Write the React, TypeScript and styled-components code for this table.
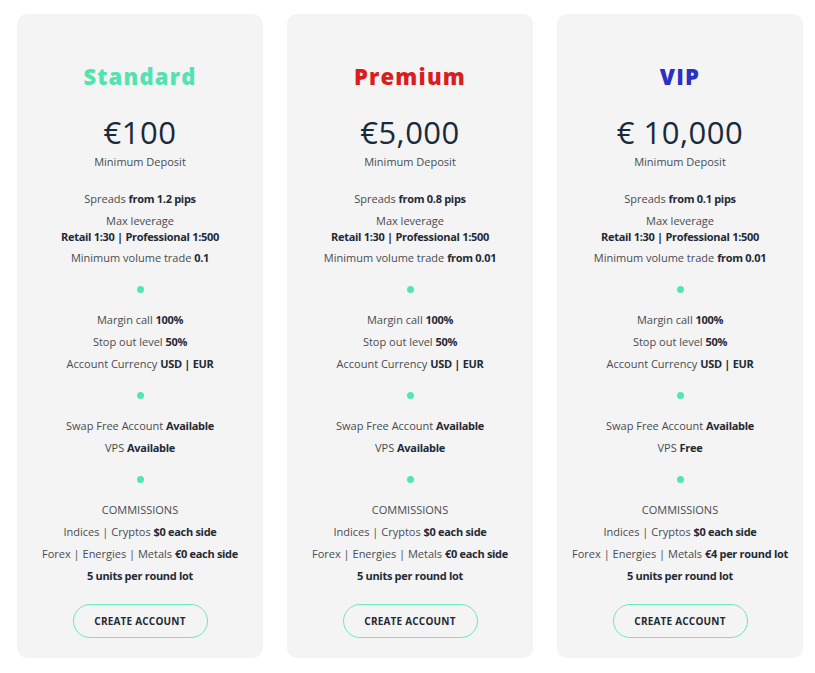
import styled, { createGlobalStyle } from "styled-components";

const GlobalStyle = createGlobalStyle`
  body {
    margin: 0;
    background: #ffffff;
    font-family: "Open Sans", "Liberation Sans", sans-serif;
  }
`;

const Page = styled.div`
  display: flex;
  gap: 24px;
  padding: 14px 0 0 17px;
`;

const Card = styled.div`
  width: 246px;
  box-sizing: border-box;
  background: #f4f4f4;
  border-radius: 10px;
  padding: 47px 0 20px;
  display: flex;
  flex-direction: column;
  align-items: center;
  text-align: center;
`;

const Title = styled.h2<{ $color: string }>`
  margin: 0;
  font-size: 22px;
  line-height: 30px;
  font-weight: 800;
  letter-spacing: 1.2px;
  color: ${({ $color }) => $color};
`;

const Price = styled.div`
  margin-top: 23px;
  font-size: 31px;
  line-height: 36px;
  font-weight: 400;
  letter-spacing: 0.5px;
  color: #1b2a3a;
`;

const Caption = styled.div`
  margin-top: 4px;
  font-size: 11px;
  line-height: 16px;
  color: #474c52;
`;

const Group = styled.div<{ $first?: boolean }>`
  margin-top: ${({ $first }) => ($first ? "21px" : "0")};
  display: flex;
  flex-direction: column;
  gap: ${({ $first }) => ($first ? "5.5px" : "6px")};
`;

const Line = styled.div`
  font-size: 11px;
  line-height: 16px;
  color: #474c52;
  white-space: nowrap;

  b {
    font-weight: 700;
    letter-spacing: -0.3px;
    color: #1f2a36;
  }
`;

const Dot = styled.span`
  display: block;
  width: 7px;
  height: 7px;
  margin: 20px 0 19px;
  border-radius: 50%;
  background: #52e6b1;
`;

const Button = styled.button`
  margin-top: 20px;
  width: 135px;
  height: 34px;
  border: 1px solid #6ee8bd;
  border-radius: 17px;
  background: transparent;
  font-family: inherit;
  font-size: 10px;
  font-weight: 700;
  letter-spacing: 0.2px;
  color: #1f2a36;
  cursor: pointer;
`;

type Plan = {
  name: string;
  color: string;
  price: string;
  spreads: string;
  minVolume: string;
  vps: string;
  forex: string;
};

const plans: Plan[] = [
  { name: "Standard", color: "#52e3ae", price: "€100", spreads: "from 1.2 pips", minVolume: "0.1", vps: "Available", forex: "€0 each side" },
  { name: "Premium", color: "#d81e1e", price: "€5,000", spreads: "from 0.8 pips", minVolume: "from 0.01", vps: "Available", forex: "€0 each side" },
  { name: "VIP", color: "#2a31c2", price: "€ 10,000", spreads: "from 0.1 pips", minVolume: "from 0.01", vps: "Free", forex: "€4 per round lot" },
];

const PlanCard = ({ plan }: { plan: Plan }) => (
  <Card>
    <Title $color={plan.color}>{plan.name}</Title>
    <Price>{plan.price}</Price>
    <Caption>Minimum Deposit</Caption>

    <Group $first>
      <Line>
        Spreads <b>{plan.spreads}</b>
      </Line>
      <Line>
        Max leverage
        <br />
        <b>Retail 1:30 | Professional 1:500</b>
      </Line>
      <Line>
        Minimum volume trade <b>{plan.minVolume}</b>
      </Line>
    </Group>

    <Dot />

    <Group>
      <Line>
        Margin call <b>100%</b>
      </Line>
      <Line>
        Stop out level <b>50%</b>
      </Line>
      <Line>
        Account Currency <b>USD | EUR</b>
      </Line>
    </Group>

    <Dot />

    <Group>
      <Line>
        Swap Free Account <b>Available</b>
      </Line>
      <Line>
        VPS <b>{plan.vps}</b>
      </Line>
    </Group>

    <Dot />

    <Group>
      <Line>COMMISSIONS</Line>
      <Line>
        Indices | Cryptos <b>$0 each side</b>
      </Line>
      <Line>
        Forex | Energies | Metals <b>{plan.forex}</b>
      </Line>
      <Line>
        <b>5 units per round lot</b>
      </Line>
    </Group>

    <Button>CREATE ACCOUNT</Button>
  </Card>
);

const App = () => (
  <>
    <GlobalStyle />
    <Page>
      {plans.map((p) => (
        <PlanCard key={p.name} plan={p} />
      ))}
    </Page>
  </>
);

export default App;
